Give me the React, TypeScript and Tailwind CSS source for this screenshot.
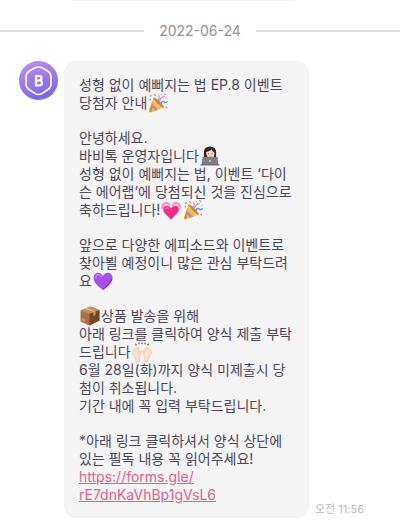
import type { ReactNode } from "react";

function Emoji({ label, children }: { label: string; children: ReactNode }) {
  return (
    <svg
      role="img"
      aria-label={label}
      viewBox="0 0 36 36"
      className="-my-px mx-px inline-block size-5 align-top"
    >
      {children}
    </svg>
  );
}

function Party() {
  return (
    <Emoji label="축하">
      <path d="M10 8 29 26 4 35Q1 35 2 32Z" fill="#f8bd45" />
      <path d="M8 15 7 33 4 35 2 32Z" fill="#dd9226" />
      <path d="M7 19 18 30 13 32 5 24Z" fill="#c982b8" />
      <path d="M12 12 27 27 23 28 10 14Z" fill="#ffdc6c" />
      <path d="M11 8Q20 11 29 25L27 27Q17 22 10 10Z" fill="#c98548" />
      <path d="M18 13Q22 10 19 4" fill="none" stroke="#8aa4ea" strokeWidth="2" />
      <path d="M21 15Q22 8 30 6" fill="none" stroke="#dd72cc" strokeWidth="2" />
      <path d="M23 20Q25 13 29 16T35 15" fill="none" stroke="#4b9eea" strokeWidth="2.500" />
      <path d="M11 2 14 5M29 1 33 3" stroke="#e97bb5" strokeWidth="2" />
      <circle cx="5" cy="5" r="1.600" fill="#52b1e7" />
      <circle cx="24" cy="3" r="1.500" fill="#f2bd38" />
      <circle cx="33" cy="26" r="1.700" fill="#ec69a9" />
      <circle cx="34" cy="10" r="1.300" fill="#f0b54a" />
      <circle cx="4" cy="12" r="1.300" fill="#d5559c" />
    </Emoji>
  );
}

function Technologist() {
  return (
    <Emoji label="노트북을 쓰는 사람">
      <path d="M7 25V12Q7 1 18 1T29 12V25Z" fill="#2e2425" />
      <path d="M3 34Q3 23 12 22H24Q33 23 33 34Z" fill="#4b4a50" />
      <path d="M14 18H22V26H14Z" fill="#e5b995" />
      <path d="M11 11Q18 10 21 6 22 10 26 12 27 22 18 22 11 21 11 11Z" fill="#fbdcbf" />
      <circle cx="15" cy="14" r="1.100" fill="#4a3029" />
      <circle cx="22" cy="14" r="1.100" fill="#4a3029" />
      <path d="M16 18Q18.500 20 21 18" fill="none" stroke="#bd6b63" strokeWidth="1.200" />
      <rect x="4" y="20" width="28" height="14" rx="1.500" fill="#7d7e86" />
      <path d="M1 33H35V35H1Z" fill="#66676e" />
      <circle cx="18" cy="27" r="1.600" fill="#d9dade" />
    </Emoji>
  );
}

function BeatingHeart() {
  return (
    <Emoji label="두근거리는 하트">
      <path d="M18 35C11 28 3 23 4 15 5 9 14 9 18 15 22 9 31 9 32 15 33 23 25 28 18 35Z" fill="#ef2d86" />
      <path d="M3 16C0 5 10 2 16 9M33 16C36 5 26 2 20 9" fill="none" stroke="#ff8fc0" strokeWidth="4" />
      <path d="M8 16Q10 13 13 15" fill="none" stroke="#ff76b0" strokeWidth="2" strokeLinecap="round" />
    </Emoji>
  );
}

function PurpleHeart() {
  return (
    <Emoji label="보라색 하트">
      <path d="M18 34C9 27 1 21 1 12 1 1 14 0 18 9 22 0 35 1 35 12 35 21 27 27 18 34Z" fill="#a94bf0" />
      <path d="M5 12C5 5 12 5 15 10" fill="none" stroke="#c57af8" strokeWidth="3" strokeLinecap="round" />
      <path d="M34 14Q31 24 18 33" fill="none" stroke="#8c28d4" strokeWidth="2" />
    </Emoji>
  );
}

function Package() {
  return (
    <Emoji label="상자">
      <path d="M1 8 19 1 35 7V26L17 35 1 28Z" fill="#a87043" />
      <path d="M17 14 35 7V26L17 35Z" fill="#744523" />
      <path d="M1 8 19 1 35 7 17 14Z" fill="#c58e5a" />
      <path d="M8 5 25 11 28 10 12 3Z" fill="#e4bd87" />
      <path d="M24 11 28 10V16L24 18Z" fill="#c9965d" />
      <path d="M3 22 9 24V29L3 26Z" fill="#cc9d6d" />
    </Emoji>
  );
}

function RaisedHands() {
  return (
    <Emoji label="두 손 들기">
      <g fill="#fce2c5" stroke="#e3b48e" strokeWidth="1">
        <path d="M7 35 6 29 2 22Q0 18 2 16L3 13Q4 11 5 13L6 11Q8 9 9 12L10 10Q12 9 12 12L13 19 15 16Q18 15 16 20L13 29V35Z" />
        <path d="M29 35 30 29 34 22Q36 18 34 16L33 13Q32 11 31 13L30 11Q28 9 27 12L26 10Q24 9 24 12L23 19 21 16Q18 15 20 20L23 29V35Z" />
      </g>
      <path d="M18 1V4M12 1 13 4M24 1 23 4M6 3 8 6M30 3 28 6" stroke="#555b69" strokeWidth="2" />
    </Emoji>
  );
}

function Avatar() {
  return (
    <svg role="img" aria-label="바비톡" viewBox="0 0 39 39" className="size-[39px] shrink-0">
      <defs>
        <linearGradient id="avatar" x1="0" y1="0" x2="0.300" y2="1">
          <stop offset="0" stopColor="#c391ea" />
          <stop offset="1" stopColor="#7c67f2" />
        </linearGradient>
      </defs>
      <circle cx="19.500" cy="19.500" r="19.500" fill="url(#avatar)" />
      <path
        d="M19.500 6C23 6 24 7.500 27 9S32 13 32 16V23Q32 27 27.500 29.500C24 31.500 23 33.500 19.500 33.500S15 31.500 11.500 29.500Q7 27 7 23V16C7 13 9 10.500 12 9S16 6 19.500 6Z"
        fill="none"
        stroke="#fff"
        strokeWidth="1.700"
      />
      <path
        d="M17 15H20Q22.500 15 22.500 17.200T20 19.500H17M20 19.500Q23 19.500 23 22T20 24.500H17V14"
        fill="none"
        stroke="#fff"
        strokeWidth="2.200"
      />
    </svg>
  );
}

export default function App() {
  return (
    <main className="bg-white font-['Inter','Noto_Sans_CJK_KR',sans-serif]">
      <div className="mr-[105px] ml-[72px] h-px bg-[#f1f1f3]" />
      <div className="mt-5 flex items-center gap-[15px]">
        <div className="h-0.5 flex-1 bg-[#dedee0]" />
        <time dateTime="2022-06-24" className="text-sm leading-5 text-[#919198]">
          2022-06-24
        </time>
        <div className="h-0.5 flex-1 bg-[#dedee0]" />
      </div>
      <article className="mt-5 flex items-start pr-4 pb-[3px] pl-[19px]">
        <Avatar />
        <div className="ml-[6px] flex max-w-[245px] flex-1 flex-col gap-[17px] rounded-xl bg-[#f4f4f5] px-[15px] pt-[15px] pb-[14px] text-sm leading-[18px] whitespace-nowrap text-[#4b475c]">
          <p>
            성형 없이 예뻐지는 법 EP.8 이벤트
            <br />
            당첨자 안내
            <Party />
          </p>
          <p>
            안녕하세요.
            <br />
            바비톡 운영자입니다
            <Technologist />
            <br />
            성형 없이 예뻐지는 법, 이벤트 ‘다이
            <br />
            슨 에어랩’에 당첨되신 것을 진심으로
            <br />
            축하드립니다!
            <BeatingHeart />
            <Party />
          </p>
          <p>
            앞으로 다양한 에피소드와 이벤트로
            <br />
            찾아뵐 예정이니 많은 관심 부탁드려
            <br />
            요
            <PurpleHeart />
          </p>
          <p>
            <Package />
            상품 발송을 위해
            <br />
            아래 링크를 클릭하여 양식 제출 부탁
            <br />
            드립니다
            <RaisedHands />
            <br />
            6월 28일(화)까지 양식 미제출시 당
            <br />
            첨이 취소됩니다.
            <br />
            기간 내에 꼭 입력 부탁드립니다.
          </p>
          <p>
            *아래 링크 클릭하셔서 양식 상단에
            <br />
            있는 필독 내용 꼭 읽어주세요!
            <br />
            <a href="https://forms.gle/rE7dnKaVhBp1gVsL6" className="text-[#e4608f] underline">
              https://forms.gle/
              <br />
              rE7dnKaVhBp1gVsL6
            </a>
          </p>
        </div>
        <time dateTime="11:56" className="ml-[6px] self-end text-[11px] leading-[18px] whitespace-nowrap text-[#bcbcc0]">
          오전 11:56
        </time>
      </article>
    </main>
  );
}
